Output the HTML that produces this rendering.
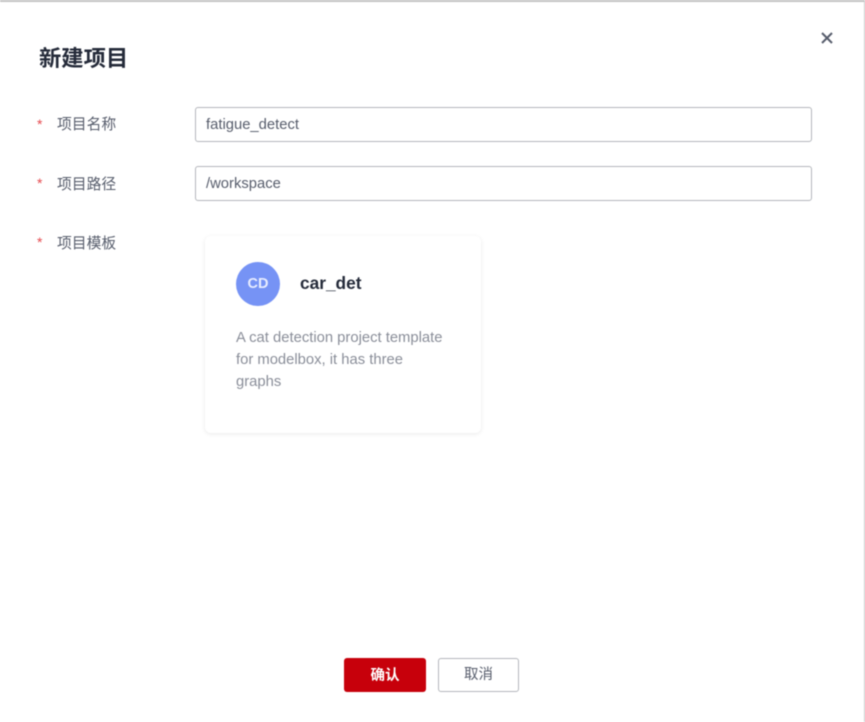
<!DOCTYPE html>
<html lang="zh">
<head>
<meta charset="utf-8">
<title>新建项目</title>
<style>
html,body{margin:0;padding:0;background:#fff;}
body{width:865px;height:722px;position:relative;overflow:hidden;font-family:"Liberation Sans","Noto Sans CJK SC",sans-serif;}
.wrap{position:absolute;left:0;top:0;width:865px;height:722px;filter:blur(.4px);}
.abs{position:absolute;white-space:nowrap;}
.frame{position:absolute;left:0;top:0;width:865px;height:722px;border-top:2px solid #c4c4c4;border-right:1px solid #c8c8c8;box-sizing:border-box;}
.title{left:39px;top:44px;font-size:22.3px;line-height:30px;font-weight:bold;color:#252b3a;}
.star{left:37px;font-size:14px;line-height:20px;color:#e5484d;}
.label{left:57px;font-size:14.8px;line-height:20px;color:#575d6c;}
.input{position:absolute;left:195px;width:615px;height:33px;border:1px solid #b4b6bc;border-radius:3px;background:#fff;}
.input span{position:absolute;left:10px;top:1px;line-height:33px;font-size:14.8px;color:#575d6c;}
.card{position:absolute;left:205px;top:236px;width:276px;height:197px;border-radius:6px;background:#fff;box-shadow:0 1px 5px rgba(0,0,0,.09);}
.avatar{position:absolute;left:236px;top:262px;width:44px;height:44px;border-radius:50%;background:#7693f5;color:#e8edff;text-align:center;line-height:44px;font-size:14.5px;font-weight:bold;}
.name{left:300px;top:272px;font-size:17.3px;line-height:22px;font-weight:bold;color:#252b3a;}
.desc{position:absolute;left:236px;top:327px;width:216px;font-size:14.8px;line-height:22px;color:#8a8e99;}
.btn{position:absolute;top:658px;height:34px;border-radius:3px;text-align:center;font-size:14.5px;box-sizing:border-box;}
.ok{left:344px;width:82px;background:#c7000b;color:#fff;font-weight:bold;line-height:32px;padding-top:2px;}
.cancel{left:438px;width:81px;background:#fff;border:1px solid #b4b6bc;color:#575d6c;line-height:30px;padding-top:1px;}
</style>
</head>
<body>
<div class="wrap">
<div class="frame"></div>
<div class="abs title">新建项目</div>
<svg class="abs" style="left:821px;top:32px" width="12" height="12" viewBox="0 0 12 12"><path d="M1 1L11 11M11 1L1 11" stroke="#575d6c" stroke-width="2" fill="none"/></svg>

<div class="abs star" style="top:114px">*</div>
<div class="abs label" style="top:115px">项目名称</div>
<div class="input" style="top:107px"><span>fatigue_detect</span></div>

<div class="abs star" style="top:173px">*</div>
<div class="abs label" style="top:175px">项目路径</div>
<div class="input" style="top:166px"><span>/workspace</span></div>

<div class="abs star" style="top:232px">*</div>
<div class="abs label" style="top:234px">项目模板</div>

<div class="card"></div>
<div class="avatar">CD</div>
<div class="abs name">car_det</div>
<div class="desc">A cat detection project template for modelbox, it has three graphs</div>

<div class="btn ok">确认</div>
<div class="btn cancel">取消</div>
</div>
</body>
</html>
